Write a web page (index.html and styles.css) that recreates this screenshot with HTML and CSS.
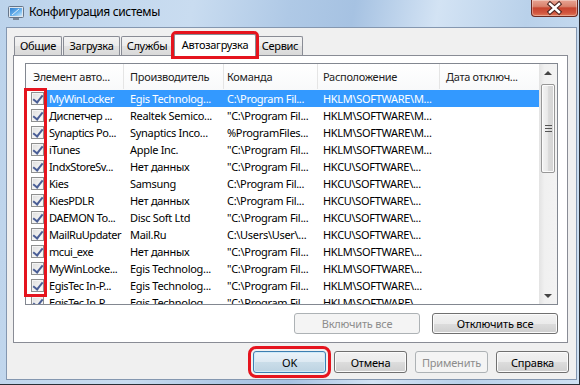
FILE: index.html
```html
<!doctype html>
<html>
  <head>
    <meta charset="utf-8" />
    <title>Конфигурация системы</title>
    <link rel="stylesheet" href="styles.css">
  </head>

  <body>
    <div class="window">
      <div class="titlebar">
        <svg class="app-icon" width="16" height="16" viewBox="0 0 16 16">
          <defs>
            <linearGradient id="scr" x1="0" y1="0" x2="1" y2="1">
              <stop offset="0" stop-color="#2f7fd0" />
              <stop offset="0.6" stop-color="#6fb6ee" />
              <stop offset="1" stop-color="#c9e6fb" />
            </linearGradient>
          </defs>
          <rect x="0.5" y="1.5" width="15" height="11" rx="1" fill="#dfe6ee" stroke="#66768a" />
          <rect x="2" y="3" width="12" height="8" fill="url(#scr)" />
          <path d="M4 10 L11 4" stroke="#ffffff" stroke-width="1" opacity="0.8" />
          <rect x="5" y="13" width="6" height="2" fill="#7a8797" />
        </svg>
        <span class="title">Конфигурация системы</span>
        <div class="close">
          <svg width="47" height="17" viewBox="0 0 47 17">
            <path d="M19 4 L28 12 M28 4 L19 12" stroke="#4b2420" stroke-width="4.5" stroke-linecap="square" />
            <path d="M19 4 L28 12 M28 4 L19 12" stroke="#ffffff" stroke-width="2.5" stroke-linecap="square" />
          </svg>
        </div>
      </div>

      <div class="client">
        <div class="tabs">
          <div class="tab t-general">Общие</div>
          <div class="tab t-boot">Загрузка</div>
          <div class="tab t-services">Службы</div>
          <div class="tab t-startup active">Автозагрузка</div>
          <div class="tab t-tools">Сервис</div>
        </div>

        <div class="panel">
          <div class="listview">
            <div class="list-main">
              <div class="lv-header">
                <div class="hc col-name">Элемент авто...</div>
                <div class="hc col-maker">Производитель</div>
                <div class="hc col-cmd">Команда</div>
                <div class="hc col-loc">Расположение</div>
                <div class="hc col-date">Дата отключ...</div>
              </div>
              <div class="lv-rows">
                <div class="row sel">
                  <span class="cb"></span>
                  <div class="cells"><span class="c-name">MyWinLocker</span><span class="c-maker">Egis Technolog...</span><span class="c-cmd">C:\Program Fil...</span><span class="c-loc">HKLM\SOFTWARE\M...</span></div>
                </div>
                <div class="row">
                  <span class="cb"></span>
                  <div class="cells"><span class="c-name">Диспетчер ...</span><span class="c-maker">Realtek Semico...</span><span class="c-cmd">"C:\Program Fil...</span><span class="c-loc">HKLM\SOFTWARE\M...</span></div>
                </div>
                <div class="row">
                  <span class="cb"></span>
                  <div class="cells"><span class="c-name">Synaptics Po...</span><span class="c-maker">Synaptics Inco...</span><span class="c-cmd">%ProgramFiles...</span><span class="c-loc">HKLM\SOFTWARE\M...</span></div>
                </div>
                <div class="row">
                  <span class="cb"></span>
                  <div class="cells"><span class="c-name">iTunes</span><span class="c-maker">Apple Inc.</span><span class="c-cmd">"C:\Program Fil...</span><span class="c-loc">HKLM\SOFTWARE\M...</span></div>
                </div>
                <div class="row">
                  <span class="cb"></span>
                  <div class="cells"><span class="c-name">IndxStoreSv...</span><span class="c-maker">Нет данных</span><span class="c-cmd">"C:\Program Fil...</span><span class="c-loc">HKCU\SOFTWARE\...</span></div>
                </div>
                <div class="row">
                  <span class="cb"></span>
                  <div class="cells"><span class="c-name">Kies</span><span class="c-maker">Samsung</span><span class="c-cmd">C:\Program Fil...</span><span class="c-loc">HKCU\SOFTWARE\...</span></div>
                </div>
                <div class="row">
                  <span class="cb"></span>
                  <div class="cells"><span class="c-name">KiesPDLR</span><span class="c-maker">Нет данных</span><span class="c-cmd">C:\Program Fil...</span><span class="c-loc">HKCU\SOFTWARE\...</span></div>
                </div>
                <div class="row">
                  <span class="cb"></span>
                  <div class="cells"><span class="c-name">DAEMON To...</span><span class="c-maker">Disc Soft Ltd</span><span class="c-cmd">"C:\Program Fil...</span><span class="c-loc">HKCU\SOFTWARE\...</span></div>
                </div>
                <div class="row">
                  <span class="cb"></span>
                  <div class="cells"><span class="c-name">MailRuUpdater</span><span class="c-maker">Mail.Ru</span><span class="c-cmd">C:\Users\User\...</span><span class="c-loc">HKCU\SOFTWARE\...</span></div>
                </div>
                <div class="row">
                  <span class="cb"></span>
                  <div class="cells"><span class="c-name">mcui_exe</span><span class="c-maker">Нет данных</span><span class="c-cmd">"C:\Program Fil...</span><span class="c-loc">HKLM\SOFTWARE\...</span></div>
                </div>
                <div class="row">
                  <span class="cb"></span>
                  <div class="cells"><span class="c-name">MyWinLocke...</span><span class="c-maker">Egis Technolog...</span><span class="c-cmd">"C:\Program Fil...</span><span class="c-loc">HKLM\SOFTWARE\...</span></div>
                </div>
                <div class="row">
                  <span class="cb"></span>
                  <div class="cells"><span class="c-name">EgisTec In-P...</span><span class="c-maker">Egis Technolog...</span><span class="c-cmd">"C:\Program Fil...</span><span class="c-loc">HKLM\SOFTWARE\...</span></div>
                </div>
                <div class="row">
                  <span class="cb"></span>
                  <div class="cells"><span class="c-name">EgisTec In-P...</span><span class="c-maker">Egis Technolog...</span><span class="c-cmd">"C:\Program Fil...</span><span class="c-loc">HKLM\SOFTWARE\...</span></div>
                </div>
              </div>
            </div>

            <div class="vscroll">
              <div class="sb-btn"><span class="arrow-up"></span></div>
              <div class="thumb"><span class="grip"></span></div>
              <div class="sb-space"></div>
              <div class="sb-btn"><span class="arrow-down"></span></div>
            </div>

            <!-- annotation frame over the checkbox column -->
            <div class="mark"></div>
          </div>

          <div class="panel-buttons">
            <button class="btn wide" disabled>Включить все</button>
            <button class="btn wide">Отключить все</button>
          </div>
        </div>

        <div class="dialog-buttons">
          <button class="btn default">OK</button>
          <button class="btn">Отмена</button>
          <button class="btn" disabled>Применить</button>
          <button class="btn">Справка</button>
        </div>
      </div>
    </div>
  </body>
</html>
```

FILE: styles.css
```css
* {
  box-sizing: border-box;
}

body {
  margin: 0;
  font-family: "Noto Sans", "DejaVu Sans", sans-serif;
  font-size: 11px;
  letter-spacing: -0.3px;
  color: #000;
}

.window {
  width: 580px;
  height: 385px;
  border-right: 1px solid #2b2f36;
  border-bottom: 1px solid #2b2f36;
  background: linear-gradient(100deg, #bcd3eb 0%, #c9dcf0 30%, #afc9e6 45%, #a6c2e2 55%, #d3e3f4 68%, #b9d1ea 82%, #cfe1f3 100%);
}

/* title bar */

.titlebar {
  height: 27px;
  display: flex;
  align-items: flex-start;
  padding-left: 8px;
}

.app-icon {
  margin-top: 5px;
  flex: none;
}

.title {
  margin-left: 5px;
  margin-top: 4px;
  font-size: 12px;
  line-height: 16px;
  letter-spacing: -0.35px;
  color: #000;
}

.close {
  margin-left: auto;
  margin-right: 1px;
  width: 47px;
  height: 17px;
  border: 1px solid #6b2a22;
  border-top: none;
  border-radius: 0 0 4px 4px;
  background: linear-gradient(#e8a493 0%, #d9826d 40%, #c7452f 50%, #d2563f 80%, #e07a58 100%);
  box-shadow: inset 0 0 0 1px rgba(255, 255, 255, 0.35);
}

.close svg {
  display: block;
  margin-left: -1px;
}

/* client area */

.client {
  margin: 0 2px 0 6px;
  height: 353px;
  border: 1px solid #8497b0;
  background-color: #f0f0f0;
}

.tabs {
  height: 27px;
  display: flex;
  align-items: flex-end;
  padding-left: 7px;
}

.tab {
  height: 19px;
  margin-right: 1px;
  border: 1px solid #898c95;
  border-bottom: none;
  border-radius: 2px 2px 0 0;
  background: linear-gradient(#f3f3f3 0%, #ececec 50%, #e2e2e2 51%, #d9d9d9 100%);
  text-align: center;
  line-height: 17px;
}

.t-general { width: 48px; }
.t-boot { width: 57px; }
.t-services { width: 52px; }
.t-tools { width: 46px; }

.tab.active {
  width: 82px;
  height: 22px;
  margin-bottom: -1px;
  position: relative;
  z-index: 1;
  background: #fff;
  line-height: 19px;
  outline: 3px solid #e5141e;
}

.panel {
  margin: 0 8px 0 6px;
  height: 288px;
  border: 1px solid #898c95;
  background-color: #fff;
  padding: 7px 9px 0 11px;
}

/* list view */

.listview {
  position: relative;
  height: 242px;
  border: 1px solid #828790;
  display: flex;
  background: #fff;
}

.list-main {
  width: 513px;
  overflow: hidden;
}

.lv-header {
  height: 26px;
  display: flex;
  background: linear-gradient(#ffffff, #f8f9fa);
}

.hc {
  height: 25px;
  line-height: 25px;
  border-right: 1px solid #e5e5e5;
  color: #1e1e1e;
  white-space: nowrap;
  overflow: hidden;
}

.hc.col-name { width: 98px; padding-left: 7px; }
.hc.col-maker { width: 100px; padding-left: 6px; }
.hc.col-cmd { width: 94px; padding-left: 3px; }
.hc.col-loc { width: 122px; padding-left: 5px; }
.hc.col-date { width: 99px; padding-left: 6px; border-right: none; }

.row {
  height: 17px;
  display: flex;
  align-items: center;
  white-space: nowrap;
}

.cb {
  position: relative;
  flex: none;
  width: 13px;
  height: 13px;
  margin: 0 3px 0 5px;
  border: 1px solid #8e8f8f;
  background: linear-gradient(135deg, #dcdcdc, #f6f6f6 70%, #ffffff);
  box-shadow: inset 0 0 0 1px #f4f4f4;
}

.cb::after {
  content: "";
  position: absolute;
  left: 3px;
  top: 0px;
  width: 4px;
  height: 8px;
  border-right: 2px solid #4a5e96;
  border-bottom: 2px solid #4a5e96;
  transform: rotate(38deg);
}

.cells {
  flex: 1;
  display: flex;
  height: 17px;
  line-height: 17px;
}

.row.sel .cells {
  background-color: #3399ff;
  color: #fff;
}

.cells span {
  overflow: hidden;
}

.c-name { width: 77px; padding-left: 2px; letter-spacing: -0.45px; }
.c-maker { width: 100px; padding-left: 6px; }
.c-cmd { width: 94px; padding-left: 3px; }
.c-loc { width: 122px; padding-left: 5px; }

/* scrollbar */

.vscroll {
  width: 18px;
  display: flex;
  flex-direction: column;
  background: linear-gradient(90deg, #e3e3e3, #f0f0f0 30%, #f3f3f3);
}

.sb-btn {
  height: 17px;
  display: flex;
  align-items: center;
  justify-content: center;
}

.arrow-up {
  border-left: 4px solid transparent;
  border-right: 4px solid transparent;
  border-bottom: 4px solid #444;
}

.arrow-down {
  border-left: 4px solid transparent;
  border-right: 4px solid transparent;
  border-top: 4px solid #444;
}

.thumb {
  margin: 3px auto 0;
  width: 14px;
  height: 89px;
  border: 1px solid #979797;
  border-radius: 2px;
  background: linear-gradient(90deg, #f4f4f4, #e9e9e9 45%, #dadada 55%, #d4d4d4);
  box-shadow: inset 0 0 0 1px #fbfbfb;
  display: flex;
  align-items: center;
  justify-content: center;
}

.grip {
  width: 7px;
  height: 7px;
  border-top: 1px solid #555;
  border-bottom: 1px solid #555;
  background: linear-gradient(transparent 2px, #555 2px, #555 3px, transparent 3px);
}

.sb-space {
  flex: 1;
}

.mark {
  position: absolute;
  left: -2px;
  top: 24px;
  width: 23px;
  height: 209px;
  border: 3px solid #e5141e;
}

/* buttons */

.btn {
  font-family: inherit;
  font-size: 11px;
  letter-spacing: -0.2px;
  color: #000;
  width: 73px;
  height: 22px;
  padding: 0;
  border: 1px solid #707070;
  border-radius: 3px;
  background: linear-gradient(#f2f2f2 0%, #ebebeb 50%, #dddddd 51%, #cfcfcf 100%);
  box-shadow: inset 0 0 0 1px #fbfbfb;
}

.btn:disabled {
  color: #8d8d8d;
  border-color: #adb2b5;
  background: #f4f4f4;
  box-shadow: none;
}

.btn.default {
  border-color: #3c7fb1;
  background: linear-gradient(#eaf4fa 0%, #dde9f2 50%, #cadde9 51%, #bdd3e2 100%);
  box-shadow: inset 0 0 0 1px #cfeaf9;
  outline: 3px solid #e5141e;
  outline-offset: 2px;
}

.panel-buttons {
  margin-top: 8px;
  display: flex;
  justify-content: flex-end;
  gap: 12px;
}

.btn.wide {
  width: 126px;
  height: 21px;
}

.dialog-buttons {
  margin-top: 8px;
  padding-right: 7px;
  display: flex;
  justify-content: flex-end;
  gap: 8px;
}
```
